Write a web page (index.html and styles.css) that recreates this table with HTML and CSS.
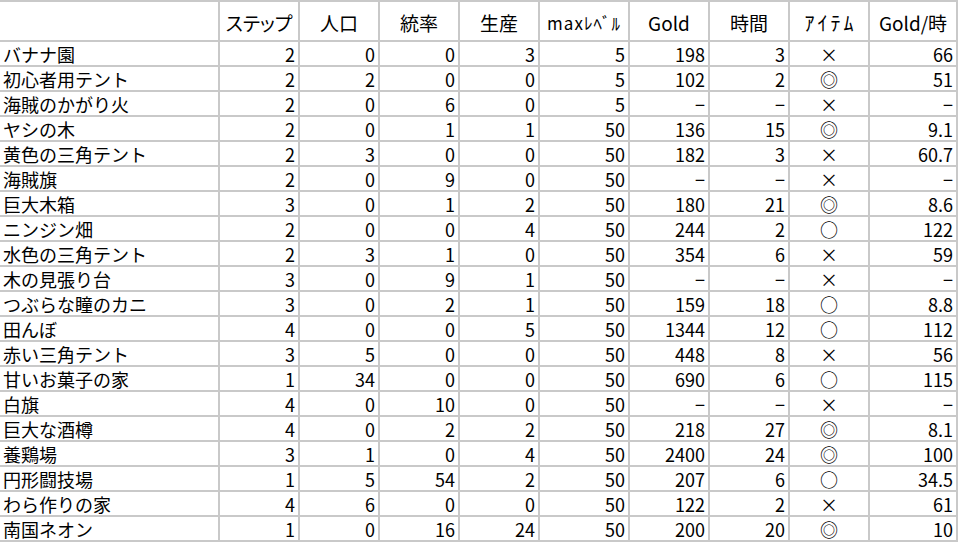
FILE: index.html
```html
<!DOCTYPE html>
<html lang="ja">
<head>
<meta charset="utf-8">
<title>施設一覧</title>
<link rel="stylesheet" href="styles.css">
</head>
<body>
<div class="sheet">
  <div class="row head">
    <div class="c h"></div>
    <div class="c h">ステップ</div>
    <div class="c h">人口</div>
    <div class="c h">統率</div>
    <div class="c h">生産</div>
    <div class="c h small">maxﾚﾍﾞﾙ</div>
    <div class="c h">Gold</div>
    <div class="c h">時間</div>
    <div class="c h wide">ｱｲﾃﾑ</div>
    <div class="c h">Gold/時</div>
  </div>
  <div class="row"><div class="c name">バナナ園</div><div class="c">2</div><div class="c">0</div><div class="c">0</div><div class="c">3</div><div class="c">5</div><div class="c">198</div><div class="c">3</div><div class="c sym">×</div><div class="c">66</div></div>
  <div class="row"><div class="c name">初心者用テント</div><div class="c">2</div><div class="c">2</div><div class="c">0</div><div class="c">0</div><div class="c">5</div><div class="c">102</div><div class="c">2</div><div class="c sym">◎</div><div class="c">51</div></div>
  <div class="row"><div class="c name">海賊のかがり火</div><div class="c">2</div><div class="c">0</div><div class="c">6</div><div class="c">0</div><div class="c">5</div><div class="c">−</div><div class="c">−</div><div class="c sym">×</div><div class="c">−</div></div>
  <div class="row"><div class="c name">ヤシの木</div><div class="c">2</div><div class="c">0</div><div class="c">1</div><div class="c">1</div><div class="c">50</div><div class="c">136</div><div class="c">15</div><div class="c sym">◎</div><div class="c">9.1</div></div>
  <div class="row"><div class="c name">黄色の三角テント</div><div class="c">2</div><div class="c">3</div><div class="c">0</div><div class="c">0</div><div class="c">50</div><div class="c">182</div><div class="c">3</div><div class="c sym">×</div><div class="c">60.7</div></div>
  <div class="row"><div class="c name">海賊旗</div><div class="c">2</div><div class="c">0</div><div class="c">9</div><div class="c">0</div><div class="c">50</div><div class="c">−</div><div class="c">−</div><div class="c sym">×</div><div class="c">−</div></div>
  <div class="row"><div class="c name">巨大木箱</div><div class="c">3</div><div class="c">0</div><div class="c">1</div><div class="c">2</div><div class="c">50</div><div class="c">180</div><div class="c">21</div><div class="c sym">◎</div><div class="c">8.6</div></div>
  <div class="row"><div class="c name">ニンジン畑</div><div class="c">2</div><div class="c">0</div><div class="c">0</div><div class="c">4</div><div class="c">50</div><div class="c">244</div><div class="c">2</div><div class="c sym">○</div><div class="c">122</div></div>
  <div class="row"><div class="c name">水色の三角テント</div><div class="c">2</div><div class="c">3</div><div class="c">1</div><div class="c">0</div><div class="c">50</div><div class="c">354</div><div class="c">6</div><div class="c sym">×</div><div class="c">59</div></div>
  <div class="row"><div class="c name">木の見張り台</div><div class="c">3</div><div class="c">0</div><div class="c">9</div><div class="c">1</div><div class="c">50</div><div class="c">−</div><div class="c">−</div><div class="c sym">×</div><div class="c">−</div></div>
  <div class="row"><div class="c name">つぶらな瞳のカニ</div><div class="c">3</div><div class="c">0</div><div class="c">2</div><div class="c">1</div><div class="c">50</div><div class="c">159</div><div class="c">18</div><div class="c sym">○</div><div class="c">8.8</div></div>
  <div class="row"><div class="c name">田んぼ</div><div class="c">4</div><div class="c">0</div><div class="c">0</div><div class="c">5</div><div class="c">50</div><div class="c">1344</div><div class="c">12</div><div class="c sym">○</div><div class="c">112</div></div>
  <div class="row"><div class="c name">赤い三角テント</div><div class="c">3</div><div class="c">5</div><div class="c">0</div><div class="c">0</div><div class="c">50</div><div class="c">448</div><div class="c">8</div><div class="c sym">×</div><div class="c">56</div></div>
  <div class="row"><div class="c name">甘いお菓子の家</div><div class="c">1</div><div class="c">34</div><div class="c">0</div><div class="c">0</div><div class="c">50</div><div class="c">690</div><div class="c">6</div><div class="c sym">○</div><div class="c">115</div></div>
  <div class="row"><div class="c name">白旗</div><div class="c">4</div><div class="c">0</div><div class="c">10</div><div class="c">0</div><div class="c">50</div><div class="c">−</div><div class="c">−</div><div class="c sym">×</div><div class="c">−</div></div>
  <div class="row"><div class="c name">巨大な酒樽</div><div class="c">4</div><div class="c">0</div><div class="c">2</div><div class="c">2</div><div class="c">50</div><div class="c">218</div><div class="c">27</div><div class="c sym">◎</div><div class="c">8.1</div></div>
  <div class="row"><div class="c name">養鶏場</div><div class="c">3</div><div class="c">1</div><div class="c">0</div><div class="c">4</div><div class="c">50</div><div class="c">2400</div><div class="c">24</div><div class="c sym">◎</div><div class="c">100</div></div>
  <div class="row"><div class="c name">円形闘技場</div><div class="c">1</div><div class="c">5</div><div class="c">54</div><div class="c">2</div><div class="c">50</div><div class="c">207</div><div class="c">6</div><div class="c sym">○</div><div class="c">34.5</div></div>
  <div class="row"><div class="c name">わら作りの家</div><div class="c">4</div><div class="c">6</div><div class="c">0</div><div class="c">0</div><div class="c">50</div><div class="c">122</div><div class="c">2</div><div class="c sym">×</div><div class="c">61</div></div>
  <div class="row"><div class="c name">南国ネオン</div><div class="c">1</div><div class="c">0</div><div class="c">16</div><div class="c">24</div><div class="c">50</div><div class="c">200</div><div class="c">20</div><div class="c sym">◎</div><div class="c">10</div></div>
</div>
</body>
</html>
```
FILE: styles.css
```css
html, body {
  margin: 0;
  padding: 0;
  background: #ffffff;
}

body {
  font-family: "Noto Sans CJK JP", "Noto Sans", sans-serif;
  font-size: 18px;
  color: #000000;
}

.sheet {
  display: grid;
  grid-template-columns: 218px 78px 78px 78px 78px 88px 78px 78px 78px 86px;
  grid-template-rows: 38px repeat(20, 23px);
  gap: 2px;
  width: max-content;
  padding: 2px 2px 2px 0;
  background: #c9c9c9;
}

.row {
  display: contents;
}

.c {
  background: #ffffff;
  display: flex;
  align-items: flex-end;
  justify-content: flex-end;
  padding: 0 3px 1px 3px;
  line-height: 20px;
  white-space: nowrap;
}

.name {
  justify-content: flex-start;
  padding-left: 3px;
}

.sym {
  justify-content: center;
}

.h {
  align-items: center;
  justify-content: center;
  padding: 4px 2px 0 2px;
  font-size: 19px;
  font-feature-settings: "palt";
}

.small {
  font-size: 17px;
  letter-spacing: 1px;
}

.wide {
  font-size: 20px;
  letter-spacing: 3px;
  padding-left: 5px;
}
```
